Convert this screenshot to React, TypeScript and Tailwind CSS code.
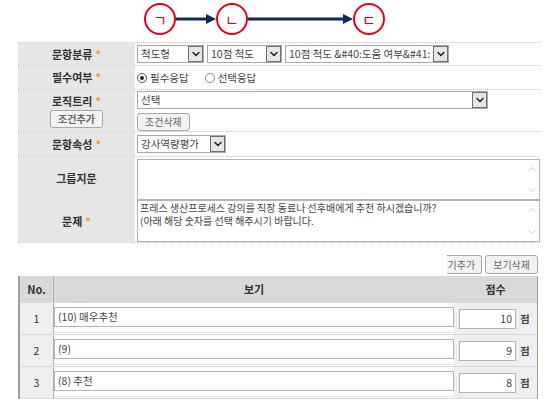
import { ChevronDown, ChevronUp } from 'lucide-react';

const FONT = "font-['Noto_Sans_CJK_KR','Noto_Sans',sans-serif]";

function Star() {
  return <span className="ml-[3px] text-[#f0a01e]">*</span>;
}

function Select({ text, width }: { text: string; width: string }) {
  return (
    <div className={`flex h-[18px] border border-[#a9a9a9] bg-white ${width}`}>
      <span className="flex-1 overflow-hidden whitespace-nowrap px-[3px] text-[10.5px] leading-[16px] text-[#444]">
        {text}
      </span>
      <span className="flex w-[15px] shrink-0 items-center justify-center border border-[#6f6f6f] bg-[#e6e6e6]">
        <ChevronDown className="h-[12px] w-[12px] text-[#222]" strokeWidth={3} />
      </span>
    </div>
  );
}

function Button({ text }: { text: string }) {
  return (
    <span className="flex h-[18px] w-fit items-center rounded-[3px] border border-[#a8a8a8] bg-[#f3f3f3] px-[7px] text-[10px] leading-none text-[#666]">
      {text}
    </span>
  );
}

function TextBox({ lines, h }: { lines: string[]; h: string }) {
  return (
    <div className={`flex border border-[#b4b4b4] bg-white ${h}`}>
      <div className="flex-1 px-[2px] text-[10px] leading-[13px] text-[#444]">
        {lines.map((l) => (
          <div key={l}>{l}</div>
        ))}
      </div>
      <div className="flex w-[14px] flex-col items-center justify-between py-[3px] text-[#b8b8b8]">
        <ChevronUp className="h-[12px] w-[12px]" strokeWidth={1.5} />
        <ChevronDown className="h-[12px] w-[12px]" strokeWidth={1.5} />
      </div>
    </div>
  );
}

function Row({ label, star, h, children, labelExtra }: {
  label: string;
  star?: boolean;
  h: string;
  children: React.ReactNode;
  labelExtra?: React.ReactNode;
}) {
  return (
    <div className={`grid grid-cols-[117px_1fr] border-b border-dotted border-[#c4c4c4] ${h}`}>
      <div className="flex flex-col items-center justify-center gap-[1px] bg-[#e6e6e6] text-[11px] font-bold text-[#333]">
        <span className="leading-[15px]">
          {label}
          {star && <Star />}
        </span>
        {labelExtra}
      </div>
      <div className="flex flex-col justify-center gap-[4px] bg-white pl-[2px]">{children}</div>
    </div>
  );
}

function Arrow({ w }: { w: number }) {
  return (
    <svg width={w} height="12" viewBox={`0 0 ${w} 12`} className="shrink-0">
      <line x1="0" y1="6" x2={w - 8} y2="6" stroke="#0d2a5c" strokeWidth="3" />
      <polygon points={`${w - 10},1 ${w},6 ${w - 10},11`} fill="#0d2a5c" />
    </svg>
  );
}

function Jamo({ ch }: { ch: string }) {
  return (
    <span className="flex h-[32px] w-[32px] shrink-0 items-center justify-center rounded-full border-[2px] border-[#e60012] bg-white text-[15px] leading-none text-[#e60012]">
      {ch}
    </span>
  );
}

const OPTIONS = [
  { no: 1, text: '(10) 매우추천', score: 10 },
  { no: 2, text: '(9)', score: 9 },
  { no: 3, text: '(8) 추천', score: 8 },
];

export default function App() {
  return (
    <div className={`h-[399px] w-[560px] overflow-hidden bg-white text-[#333] ${FONT}`}>
      {/* step indicator */}
      <div className="flex h-[42px] items-start pl-[144px] pt-[3px]">
        <div className="flex items-center">
          <Jamo ch="ㄱ" />
          <Arrow w={40} />
          <Jamo ch="ㄴ" />
          <Arrow w={105} />
          <Jamo ch="ㄷ" />
        </div>
      </div>

      {/* form */}
      <div className="ml-[18px] w-[522px] border-t border-dotted border-[#c4c4c4]">
        <Row label="문항분류" star h="h-[23px]">
          <div className="flex gap-[3px]">
            <Select text="척도형" width="w-[67px]" />
            <Select text="10점 척도" width="w-[75px]" />
            <Select text="10점 척도 &#40:도움 여부&#41:" width="w-[164px]" />
          </div>
        </Row>
        <Row label="필수여부" star h="h-[24px]">
          <div className="flex items-center gap-[16px] text-[10.5px] text-[#444]">
            <span className="flex items-center gap-[3px]">
              <span className="flex h-[10px] w-[10px] items-center justify-center rounded-full border border-[#555]">
                <span className="h-[4px] w-[4px] rounded-full bg-[#222]" />
              </span>
              필수응답
            </span>
            <span className="flex items-center gap-[3px]">
              <span className="h-[10px] w-[10px] rounded-full border border-[#888]" />
              선택응답
            </span>
          </div>
        </Row>
        <Row label="로직트리" star h="h-[42px]" labelExtra={<Button text="조건추가" />}>
          <Select text="선택" width="w-[351px]" />
          <Button text="조건삭제" />
        </Row>
        <Row label="문항속성" star h="h-[25px]">
          <Select text="강사역량평가" width="w-[89px]" />
        </Row>
        <div className="grid h-[43px] grid-cols-[117px_1fr] border-b border-dotted border-[#c4c4c4]">
          <div className="flex items-center justify-center bg-[#e6e6e6] text-[11px] font-bold">그룹지문</div>
          <div className="bg-white pl-[2px] pt-[2px]">
            <TextBox lines={[]} h="h-[41px]" />
          </div>
        </div>
        <div className="grid h-[43px] grid-cols-[117px_1fr] border-b border-dotted border-[#c4c4c4]">
          <div className="flex items-center justify-center bg-[#e6e6e6] text-[11px] font-bold">
            <span>
              문제
              <Star />
            </span>
          </div>
          <div className="bg-white pl-[2px]">
            <TextBox
              lines={[
                '프레스 생산프로세스 강의를 직장 동료나 선후배에게 추천 하시겠습니까?',
                '(아래 해당 숫자를 선택 해주시기 바랍니다.',
              ]}
              h="h-[42px]"
            />
          </div>
        </div>
      </div>

      {/* option buttons (first one is cut off on the left in the capture) */}
      <div className="mt-[12px] flex h-[19px] justify-end gap-[3px] pr-[22px]">
        <span className="flex h-[19px] items-center rounded-r-[3px] border-y border-r border-[#a8a8a8] bg-[#f3f3f3] pl-[1px] pr-[6px] text-[10px] leading-none text-[#666]">
          기추가
        </span>
        <span className="flex h-[19px] items-center rounded-[3px] border border-[#a8a8a8] bg-[#f3f3f3] px-[7px] text-[10px] leading-none text-[#666]">
          보기삭제
        </span>
      </div>

      {/* options table */}
      <div className="ml-[18px] mt-[2px] w-[520px] border-l-2 border-r border-[#a0a0a0]">
        <div className="grid h-[26px] grid-cols-[34px_1fr_83px] bg-[#d9d9d9] text-[11px] font-bold">
          <div className="flex items-center justify-center border-r border-[#b0b0b0]">No.</div>
          <div className="flex items-center justify-center">보기</div>
          <div className="flex items-center justify-center">점수</div>
        </div>
        {OPTIONS.map((o) => (
          <div
            key={o.no}
            className="grid h-[32px] grid-cols-[34px_1fr_83px] border-t border-[#d8d8d8] text-[10.5px]"
          >
            <div className="flex items-center justify-center border-r border-[#b0b0b0] bg-[#efefef]">{o.no}</div>
            <div className="flex flex-col bg-white pt-[4px]">
              <div className="flex h-[20px] items-center border border-[#b4b4b4] px-[3px] text-[#444]">{o.text}</div>
              <div className="mt-[5px] border-t border-[#e2e2e2]" />
            </div>
            <div className="flex items-center gap-[4px] bg-[#efefef] pl-[5px]">
              <div className="flex h-[20px] w-[57px] items-center justify-end border border-[#b4b4b4] bg-white px-[3px] text-[#444]">
                {o.score}
              </div>
              <span className="font-bold text-[#444]">점</span>
            </div>
          </div>
        ))}
        <div className="h-[10px] border-t border-[#d8d8d8] bg-white" />
      </div>
    </div>
  );
}
